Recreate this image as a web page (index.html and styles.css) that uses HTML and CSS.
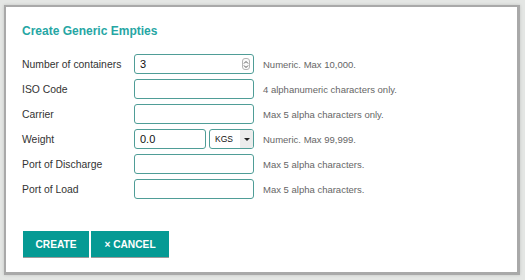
FILE: index.html
```html
<!DOCTYPE html>
<html lang="en">
<head>
    <meta charset="UTF-8">
    <title>Create Generic Empties</title>
    <link rel="stylesheet" href="styles.css">
</head>
<body>
    <div class="modal">
        <h2 class="modal-title">Create Generic Empties</h2>

        <form class="empties-form">
            <label class="field-label" for="count">Number of containers</label>
            <div class="input-wrap">
                <input type="text" id="count" class="field-input" value="3">
                <span class="spinner">
                    <svg width="6" height="9" viewBox="0 0 6 9"><path d="M1 3.5 L3 1.5 L5 3.5 M1 5.5 L3 7.5 L5 5.5" fill="none" stroke="#555" stroke-width="1"/></svg>
                </span>
            </div>
            <span class="field-help">Numeric. Max 10,000.</span>

            <label class="field-label" for="iso">ISO Code</label>
            <input type="text" id="iso" class="field-input">
            <span class="field-help">4 alphanumeric characters only.</span>

            <label class="field-label" for="carrier">Carrier</label>
            <input type="text" id="carrier" class="field-input">
            <span class="field-help">Max 5 alpha characters only.</span>

            <label class="field-label" for="weight">Weight</label>
            <div class="weight-row">
                <input type="text" id="weight" class="field-input weight-input" value="0.0">
                <div class="unit-select">
                    <span class="unit-value">KGS</span>
                    <span class="unit-arrow"></span>
                </div>
            </div>
            <span class="field-help">Numeric. Max 99,999.</span>

            <label class="field-label" for="pod">Port of Discharge</label>
            <input type="text" id="pod" class="field-input">
            <span class="field-help">Max 5 alpha characters.</span>

            <label class="field-label" for="pol">Port of Load</label>
            <input type="text" id="pol" class="field-input">
            <span class="field-help">Max 5 alpha characters.</span>
        </form>

        <div class="modal-actions">
            <button type="button" class="btn btn-create">CREATE</button>
            <button type="button" class="btn btn-cancel">&times; CANCEL</button>
        </div>
    </div>
</body>
</html>
```

FILE: styles.css
```css
* {
    margin: 0;
    padding: 0;
    box-sizing: border-box;
}

body {
    font-family: 'Liberation Sans', Arial, sans-serif;
    background: #e4e6e4;
    width: 525px;
    height: 280px;
    overflow: hidden;
    padding: 5px 0 0 4px;
}

.modal {
    width: 516px;
    height: 270px;
    background: #ffffff;
    border: 2px solid #a9a9a9;
    border-right-width: 3px;
    border-bottom-width: 3px;
    box-shadow: 0 0 3px rgba(0, 0, 0, 0.15);
    padding: 17px 16px 0 16px;
}

.modal-title {
    color: #26a6a4;
    font-size: 12px;
    font-weight: 700;
    line-height: 14px;
    margin-bottom: 16px;
}

.empties-form {
    display: grid;
    grid-template-columns: 103px 120px auto;
    column-gap: 9px;
    row-gap: 5px;
    align-items: center;
}

.field-label {
    color: #333333;
    font-size: 10.4px;
}

.field-input {
    width: 120px;
    height: 20px;
    border: 1px solid #4f9d97;
    border-radius: 3px;
    padding: 0 5px;
    font-family: 'Liberation Sans', Arial, sans-serif;
    font-size: 11px;
    color: #111111;
    outline: none;
}

.field-help {
    color: #666666;
    font-size: 9.5px;
}

.input-wrap {
    position: relative;
    width: 120px;
}

.spinner {
    position: absolute;
    top: 4px;
    right: 4px;
    width: 8px;
    height: 12px;
    border: 1px solid #b5b5b5;
    border-radius: 3px;
    display: flex;
    align-items: center;
    justify-content: center;
    background: #fafafa;
}

.weight-row {
    display: flex;
    gap: 3px;
    width: 120px;
}

.weight-input {
    width: 72px;
}

.unit-select {
    flex: 1;
    height: 20px;
    border: 1px solid #4f9d97;
    border-radius: 3px;
    display: flex;
    align-items: stretch;
    overflow: hidden;
}

.unit-value {
    flex: 1;
    font-size: 8.5px;
    line-height: 18px;
    padding-left: 5px;
    color: #111111;
}

.unit-arrow {
    width: 13px;
    background: #ececec;
    position: relative;
}

.unit-arrow::after {
    content: '';
    position: absolute;
    top: 8px;
    left: 4px;
    border-left: 3px solid transparent;
    border-right: 3px solid transparent;
    border-top: 3px solid #222222;
}

.modal-actions {
    display: flex;
    gap: 2px;
    margin-top: 32px;
    padding-left: 1px;
}

.btn {
    height: 26px;
    background: #059a94;
    color: #ffffff;
    border: none;
    font-family: 'Liberation Sans', Arial, sans-serif;
    font-size: 10.2px;
    font-weight: 700;
    box-shadow: 0 1px 0 #9a9a9a;
}

.btn-create {
    width: 66px;
}

.btn-cancel {
    width: 78px;
}
```
